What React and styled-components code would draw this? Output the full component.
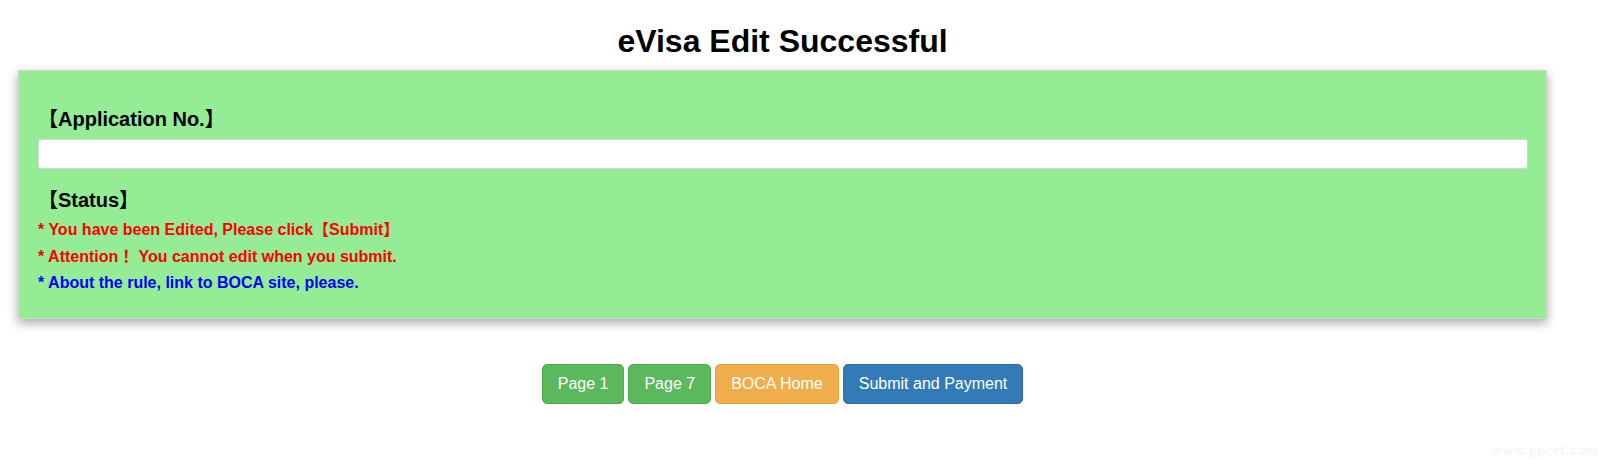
import React from 'react';
import styled, { createGlobalStyle } from 'styled-components';

const GlobalStyle = createGlobalStyle`
  body {
    margin: 0;
    background: #fff;
    font-family: "Liberation Sans", "Noto Sans CJK JP", Arial, sans-serif;
  }
`;

function App() {
  return (
    <Page>
      <GlobalStyle />
      <Container>
        <Title>eVisa Edit Successful</Title>
        <Panel>
          <Heading>【Application No.】</Heading>
          <Field type="text" readOnly />
          <Heading $spaced>【Status】</Heading>
          <Note $color="#ff0000">* You have been Edited, Please click【Submit】</Note>
          <Note $color="#ff0000">* Attention！ You cannot edit when you submit.</Note>
          <Note $color="#0000ff">* About the rule, link to BOCA site, please.</Note>
        </Panel>
        <Actions>
          <Button $variant="success">Page 1</Button>
          <Button $variant="success">Page 7</Button>
          <Button $variant="warning">BOCA Home</Button>
          <Button $variant="primary">Submit and Payment</Button>
        </Actions>
      </Container>
      <Watermark>www.pport.com</Watermark>
    </Page>
  );
}

export default App;

const variants = {
  success: { bg: '#5cb85c', border: '#4cae4c' },
  warning: { bg: '#f0ad4e', border: '#eea236' },
  primary: { bg: '#337ab7', border: '#2e6da4' },
};

const Page = styled.div`
  position: relative;
  height: 460px;
  overflow: hidden;
`;

const Container = styled.div`
  width: 1529px;
  margin-left: 18px;
`;

const Title = styled.h1`
  margin: 23px 0 11px;
  font-size: 32px;
  line-height: 36px;
  font-weight: bold;
  text-align: center;
  color: #000;
`;

const Panel = styled.section`
  padding: 36px 18px 21px 19px;
  background: #94ec94;
  border: 1px solid #cfd8cf;
  box-shadow: 0 4px 10px rgba(0, 0, 0, 0.35);
`;

const Heading = styled.h3`
  margin: ${props => (props.$spaced ? '19px' : '0')} 0 0;
  font-size: 20px;
  line-height: 24px;
  font-weight: bold;
  color: #000;
`;

const Field = styled.input`
  display: block;
  box-sizing: border-box;
  width: 100%;
  height: 30px;
  margin-top: 8px;
  padding: 0 8px;
  background: #fff;
  border: 1px solid #d4d4d4;
  border-radius: 3px;
  outline: none;
`;

const Note = styled.p`
  margin: 0;
  font-size: 16px;
  line-height: 26.5px;
  font-weight: bold;
  color: ${props => props.$color};
  &:first-of-type {
    margin-top: 5px;
  }
`;

const Actions = styled.div`
  display: flex;
  justify-content: center;
  gap: 4px;
  margin-top: 45px;
`;

const Button = styled.button`
  padding: 8px 15px;
  font-family: "Liberation Sans", Arial, sans-serif;
  font-size: 16px;
  line-height: 22.86px;
  color: #fff;
  background: ${props => variants[props.$variant].bg};
  border: 1px solid ${props => variants[props.$variant].border};
  border-radius: 5px;
  cursor: pointer;
`;

const Watermark = styled.span`
  position: absolute;
  right: 2px;
  bottom: 2px;
  font-family: "DejaVu Sans", sans-serif;
  font-size: 12px;
  font-weight: bold;
  color: #f6f6f6;
`;
